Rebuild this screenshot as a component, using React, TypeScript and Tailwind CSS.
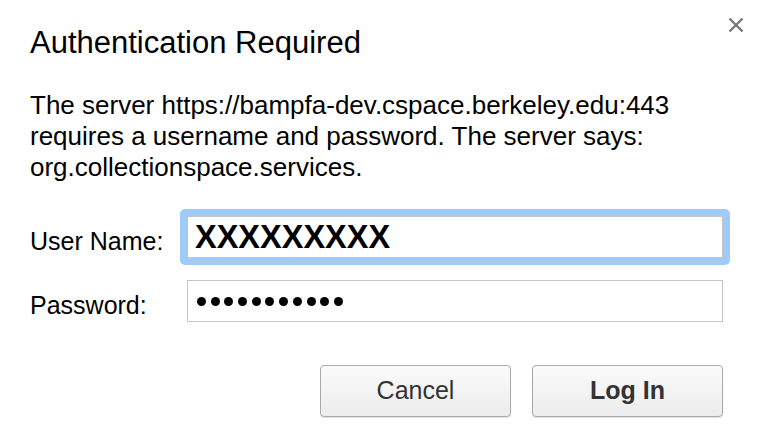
import type { FC } from "react";

const CloseIcon: FC = () => (
  <svg width="16" height="16" viewBox="0 0 16 16" className="block">
    <path d="M1.5 1.5 L14.5 14.5 M14.5 1.5 L1.5 14.5" stroke="#777" strokeWidth="2.4" strokeLinecap="butt" />
  </svg>
);

const App: FC = () => {
  return (
    <div
      className="w-[760px] h-[448px] bg-white text-black overflow-hidden relative"
      style={{ fontFamily: '"Liberation Sans", Arial, sans-serif' }}
    >
      <button className="absolute left-[728px] top-[17px] p-0">
        <CloseIcon />
      </button>

      <div className="pl-[30px] pt-[25px]">
        <h1 className="text-[31px] leading-[36px] font-normal">Authentication Required</h1>

        <p className="mt-[29px] text-[26px] leading-[31px] w-[720px]">
          The server https://bampfa-dev.cspace.berkeley.edu:443
          <br />
          requires a username and password. The server says:
          <br />
          org.collectionspace.services.
        </p>

        <div className="mt-[26px] flex flex-col gap-[15px]">
          <div className="flex items-center">
            <label className="w-[150px] pt-[7px] text-[25px] leading-[30px]">User Name:</label>
            <div className="rounded-[5px] bg-[#9fcbf8] p-[7px]">
              <div className="w-[536px] h-[42px] bg-white border border-[#c4c4c4] flex items-center pl-[7px]">
                <span className="text-[32.5px] font-bold leading-none">XXXXXXXXX</span>
              </div>
            </div>
          </div>

          <div className="flex items-center">
            <label className="w-[157px] pt-[7px] text-[25px] leading-[30px]">Password:</label>
            <div className="w-[536px] h-[42px] bg-white border border-[#c4c4c4] flex items-center pl-[9px] gap-[4.7px]">
              {Array.from({ length: 11 }).map((_, i) => (
                <span key={i} className="w-[9px] h-[9px] rounded-full bg-black" />
              ))}
            </div>
          </div>
        </div>

        <div className="mt-[43px] flex justify-end gap-[21px] pr-[37px]">
          <button className="w-[191px] h-[52px] rounded-[4px] border border-[#a9a9a9] bg-gradient-to-b from-[#fbfbfb] to-[#ececec] shadow-[0_1px_1px_rgba(0,0,0,0.12)] text-[25px] text-[#333]">
            Cancel
          </button>
          <button className="w-[191px] h-[52px] rounded-[4px] border border-[#a9a9a9] bg-gradient-to-b from-[#fbfbfb] to-[#ececec] shadow-[0_1px_1px_rgba(0,0,0,0.12)] text-[25px] font-bold text-[#333]">
            Log In
          </button>
        </div>
      </div>
    </div>
  );
};

export default App;
